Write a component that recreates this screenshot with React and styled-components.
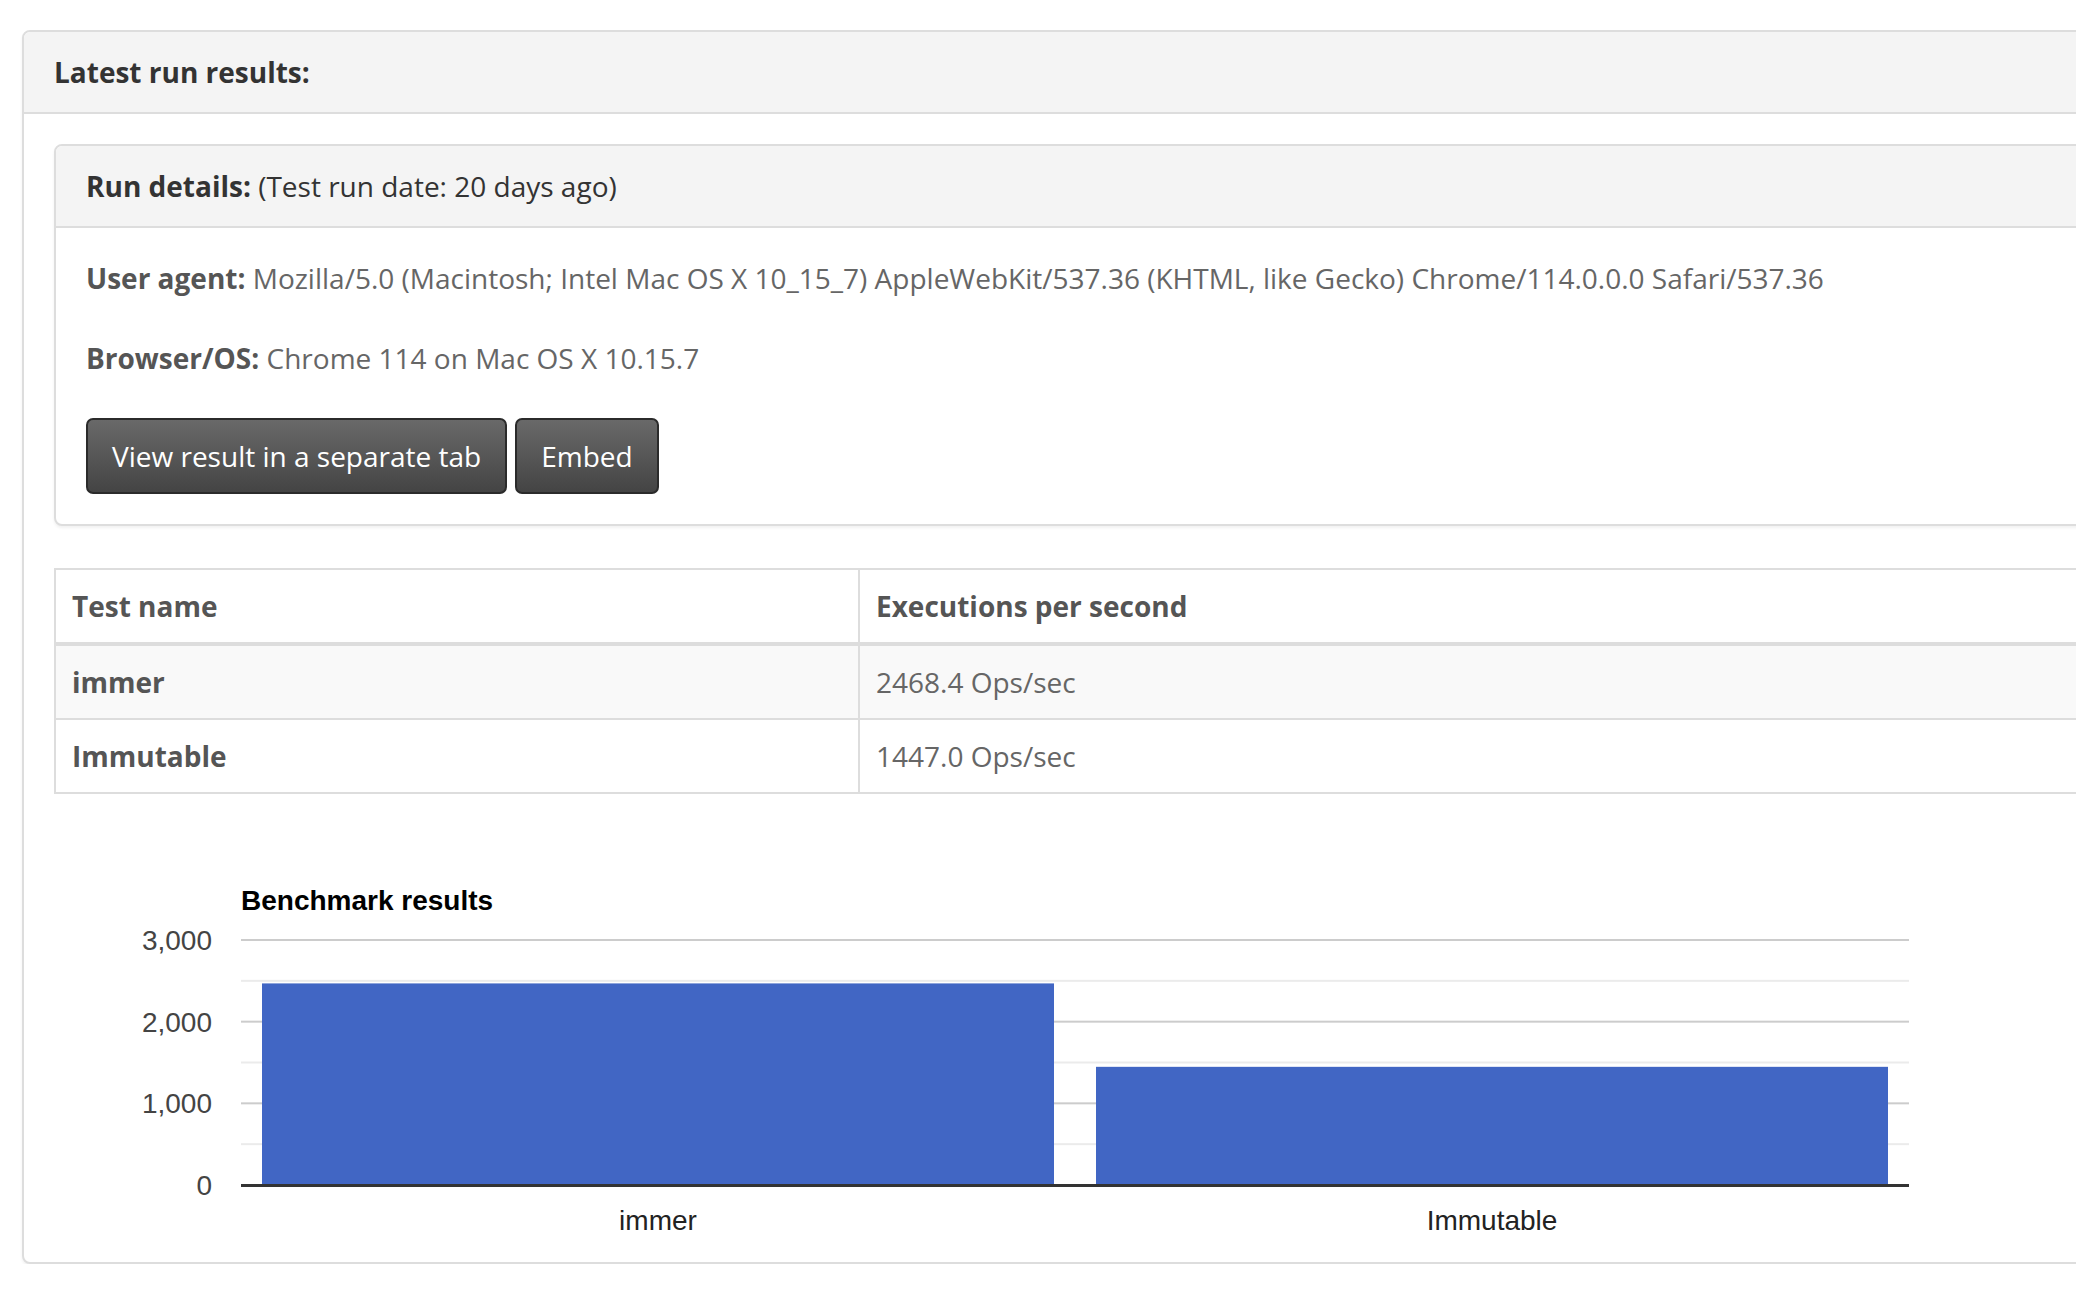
import React from 'react'
import styled, { createGlobalStyle } from 'styled-components'

const font = `"Open Sans", "Noto Sans", sans-serif`

const GlobalStyle = createGlobalStyle`
  html, body {
    margin: 0;
    padding: 0;
    background: #fff;
    overflow: hidden;
  }
  body {
    font-family: ${font};
    font-size: 28px;
    line-height: 40px;
    color: #555;
  }
`

const Page = styled.div`
  padding: 30px 0 0 22px;
`

const Panel = styled.div`
  width: ${(p) => p.width || 'auto'};
  background: #fff;
  border: 2px solid #ddd;
  border-radius: 8px;
  box-shadow: 0 2px 3px rgba(0, 0, 0, 0.06);
  margin-bottom: ${(p) => p.mb || '0'};
`

const PanelHeading = styled.div`
  background: #f4f4f4;
  border-bottom: 2px solid #ddd;
  border-radius: 6px 6px 0 0;
  padding: 20px 30px;
  color: #333;
  font-size: 28px;
  line-height: 40px;
`

const PanelBody = styled.div`
  padding: 30px;
`

const Strong = styled.strong`
  font-weight: 700;
`

const InfoLine = styled.p`
  margin: 0 0 40px;
  color: #666;

  ${Strong} {
    color: #555;
  }
`

const ButtonRow = styled.div`
  display: flex;
  gap: 8px;
`

const Button = styled.button`
  font-family: ${font};
  font-size: 28px;
  line-height: 40px;
  color: #fff;
  padding: 16px 24px;
  border: 2px solid #2b2b2b;
  border-radius: 7px;
  background: linear-gradient(#696969, #444444);
  cursor: pointer;
`

const Table = styled.table`
  width: 100%;
  border-collapse: collapse;
  border: 2px solid #ddd;
  margin-bottom: 38px;
`

const Th = styled.th`
  text-align: left;
  font-weight: 700;
  color: #555;
  padding: 16px 16px;
  line-height: 40px;
  border-right: 2px solid #ddd;
  border-bottom: 4px solid #ddd;
  width: ${(p) => p.width || 'auto'};
`

const Tr = styled.tr`
  background: ${(p) => (p.striped ? '#f9f9f9' : '#fff')};
  border-bottom: 2px solid #ddd;
`

const Td = styled.td`
  padding: 16px 16px;
  line-height: 40px;
  color: #666;
  font-weight: ${(p) => (p.bold ? 700 : 400)};
  border-right: 2px solid #ddd;

  ${(p) => p.bold && 'color: #555;'}
`

const ChartWrap = styled.div`
  height: 400px;

  svg {
    display: block;
    overflow: visible;
  }
`

const results = [
  { name: 'immer', ops: 2468.4 },
  { name: 'Immutable', ops: 1447.0 },
]

function BenchmarkChart() {
  const left = 187
  const right = 1855
  const top = 108
  const bottom = 353
  const max = 3000
  const y = (v) => bottom - (v / max) * (bottom - top)
  const group = (right - left) / results.length
  const barW = 792
  const chartFont = '"Liberation Sans", Arial, sans-serif'

  return (
    <ChartWrap>
      <svg width="1960" height="400" viewBox="0 0 1960 400">
        <text x={left} y={78} fontFamily={chartFont} fontSize="28" fontWeight="700" fill="#000">
          Benchmark results
        </text>
        {[500, 1500, 2500].map((v) => (
          <rect key={v} x={left} y={y(v) - 1} width={right - left} height="2" fill="#ebebeb" />
        ))}
        {[1000, 2000, 3000].map((v) => (
          <rect key={v} x={left} y={y(v) - 1} width={right - left} height="2" fill="#cccccc" />
        ))}
        {[0, 1000, 2000, 3000].map((v) => (
          <text
            key={v}
            x={158}
            y={y(v) + 10}
            textAnchor="end"
            fontFamily={chartFont}
            fontSize="28"
            fill="#444"
          >
            {v.toLocaleString('en-US')}
          </text>
        ))}
        {results.map((r, i) => {
          const cx = left + group * i + group / 2
          return (
            <g key={r.name}>
              <rect x={cx - barW / 2} y={y(r.ops)} width={barW} height={bottom - y(r.ops)} fill="#4166c4" />
              <text x={cx} y={398} textAnchor="middle" fontFamily={chartFont} fontSize="28" fill="#222">
                {r.name}
              </text>
            </g>
          )
        })}
        <rect x={left} y={bottom - 1} width={right - left} height="3" fill="#333" />
      </svg>
    </ChartWrap>
  )
}

export default function App() {
  return (
    <>
      <GlobalStyle />
      <Page>
        <Panel width="2200px">
          <PanelHeading>
            <Strong>Latest run results:</Strong>
          </PanelHeading>
          <PanelBody>
            <Panel mb="42px">
              <PanelHeading>
                <Strong>Run details:</Strong> (Test run date: 20 days ago)
              </PanelHeading>
              <PanelBody>
                <InfoLine>
                  <Strong>User agent:</Strong> Mozilla/5.0 (Macintosh; Intel Mac OS X 10_15_7) AppleWebKit/537.36
                  (KHTML, like Gecko) Chrome/114.0.0.0 Safari/537.36
                </InfoLine>
                <InfoLine>
                  <Strong>Browser/OS:</Strong> Chrome 114 on Mac OS X 10.15.7
                </InfoLine>
                <ButtonRow>
                  <Button>View result in a separate tab</Button>
                  <Button>Embed</Button>
                </ButtonRow>
              </PanelBody>
            </Panel>

            <Table>
              <thead>
                <tr>
                  <Th width="770px">Test name</Th>
                  <Th>Executions per second</Th>
                </tr>
              </thead>
              <tbody>
                {results.map((r, i) => (
                  <Tr key={r.name} striped={i % 2 === 0}>
                    <Td bold>{r.name}</Td>
                    <Td>{r.ops.toFixed(1)} Ops/sec</Td>
                  </Tr>
                ))}
              </tbody>
            </Table>

            <BenchmarkChart />
          </PanelBody>
        </Panel>
      </Page>
    </>
  )
}
